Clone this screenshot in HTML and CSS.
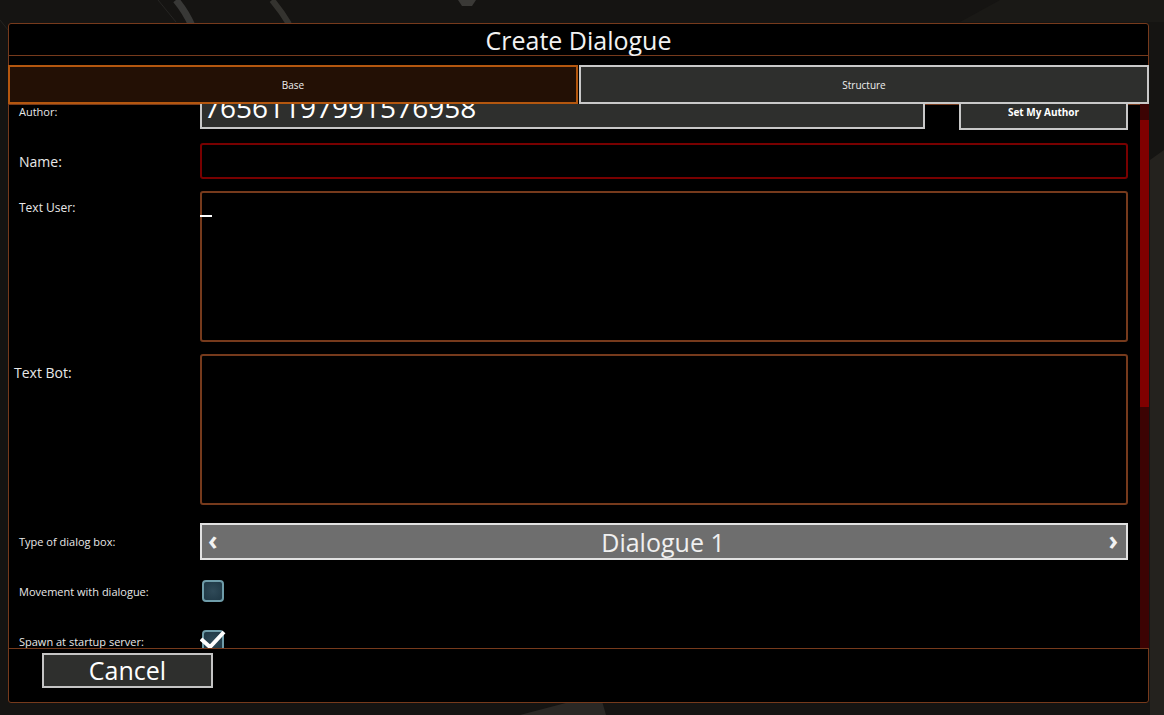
FILE: index.html
```html
<!DOCTYPE html>
<html lang="en">
<head>
    <meta charset="UTF-8">
    <title>Create Dialogue</title>
    <link rel="stylesheet" href="styles.css">
</head>
<body>
    <!-- fundo do jogo atrás do painel -->
    <svg class="backdrop" width="1164" height="715" viewBox="0 0 1164 715">
        <path d="M176 0 Q186 12 192 26" stroke="#383836" stroke-width="7" fill="none"/>
        <path d="M158 0 L176 22" stroke="#262523" stroke-width="1" fill="none"/>
        <path d="M272 0 Q282 12 289 24" stroke="#34332f" stroke-width="6" fill="none"/>
        <path d="M458 0 L476 0 L472 6 L462 6 Z" fill="#3a3936"/>
        <path d="M1000 0 L1164 0 L1164 22 L960 22 Z" fill="#1a1916"/>
        <path d="M1150 160 L1164 150 L1164 715 L1150 715 Z" fill="#24221e"/>
        <path d="M520 715 L600 694 L606 715 Z" fill="#2a2825"/>
        <path d="M0 20 L8 30" stroke="#242320" stroke-width="1"/>
    </svg>

    <div class="panel">
        <div class="title-bar">Create Dialogue</div>

        <div class="tabs">
            <button class="tab tab-active">Base</button>
            <button class="tab">Structure</button>
        </div>

        <div class="scroll-view">
            <div class="form">
                <div class="row row-author">
                    <span class="field-label">Author:</span>
                    <div class="author-input">76561197991576958</div>
                    <button class="btn-author">Set My Author</button>
                </div>

                <div class="row row-name">
                    <span class="field-label label-big">Name:</span>
                    <div class="input-name"></div>
                </div>

                <div class="row row-text">
                    <span class="field-label label-user">Text User:</span>
                    <div class="text-box"><span class="caret"></span></div>
                </div>

                <div class="row row-text row-bot">
                    <span class="field-label label-bot">Text Bot:</span>
                    <div class="text-box"></div>
                </div>

                <div class="row row-type">
                    <span class="field-label">Type of dialog box:</span>
                    <div class="selector">
                        <span class="arrow">&#x2039;</span>
                        <span class="selector-value">Dialogue 1</span>
                        <span class="arrow">&#x203A;</span>
                    </div>
                </div>

                <div class="row row-check">
                    <span class="field-label">Movement with dialogue:</span>
                    <div class="checkbox"></div>
                </div>

                <div class="row row-check row-spawn">
                    <span class="field-label">Spawn at startup server:</span>
                    <div class="checkbox">
                        <svg class="check-mark" width="28" height="24" viewBox="0 0 28 24">
                            <path d="M1 10 L10 18 L24 3" stroke="#fff" stroke-width="4" fill="none" stroke-linejoin="miter"/>
                        </svg>
                    </div>
                </div>
            </div>
            <div class="scrollbar"><div class="scroll-thumb"></div></div>
        </div>

        <div class="footer">
            <button class="btn-cancel">Cancel</button>
        </div>
    </div>
</body>
</html>
```

FILE: styles.css
```css
* { box-sizing: border-box; }
body {
    margin: 0;
    height: 715px;
    overflow: hidden;
    background: #151412;
    color: #f2f2f2;
    font-family: 'Open Sans', 'Liberation Sans', sans-serif;
}
.backdrop {
    position: absolute;
    top: 0; left: 0;
}
.panel {
    position: relative;
    margin: 23px 0 0 8px;
    width: 1141px;
    height: 680px;
    border: 1px solid #763a1c;
    border-radius: 3px;
    background: #000;
    display: flex;
    flex-direction: column;
}
.title-bar {
    height: 32px;
    border-bottom: 1px solid #763a1c;
    margin-bottom: 9px;
    display: flex;
    align-items: center;
    justify-content: center;
    font-size: 25px;
}
.tabs {
    display: flex;
    gap: 1px;
    margin: 0 -1px;
    height: 39px;
    position: relative;
    z-index: 1;
}
.tab {
    flex: 1;
    padding: 0;
    border: 2px solid #c9c9c9;
    background: #2e2f2d;
    color: #eee;
    font-family: inherit;
    font-size: 10px;
}
.tab-active {
    background: #231005;
    border-color: #b4570f;
}
/* Área rolável */
.scroll-view {
    flex: 1;
    display: flex;
    margin-right: -1px;
    overflow: hidden;
    box-shadow: inset 0 1px 0 #763a1c;
}
.form {
    flex: 1;
    margin-top: -11px;
    padding: 0 12px 0 10px;
}
.scrollbar {
    width: 9px;
    background: #3c0303;
}
.scroll-thumb {
    margin-top: 16px;
    height: 287px;
    background: #800000;
}
.row {
    display: flex;
    align-items: center;
}
.field-label {
    width: 181px;
    flex-shrink: 0;
    font-size: 11px;
    color: #e8e8e8;
}
.label-big { font-size: 14px; }
.row-author { height: 36px; }
.author-input {
    width: 725px;
    height: 36px;
    border: 2px solid #c8c8c8;
    border-top-color: #a9a9a9;
    background: #2e2f2d;
    padding-left: 2px;
    font-size: 28px;
    line-height: 24px;
    color: #fff;
    overflow: hidden;
}
.btn-author {
    margin-left: 34px;
    margin-top: 2px;
    width: 169px;
    height: 36px;
    border: 2px solid #c8c8c8;
    background: #2e2f2d;
    color: #fff;
    font-family: inherit;
    font-size: 10px;
    font-weight: bold;
    padding: 0;
}
.row-name { margin-top: 14px; height: 36px; }
.input-name {
    flex: 1;
    height: 36px;
    border: 2px solid #780000;
    border-radius: 3px;
}
.row-text {
    margin-top: 12px;
    align-items: flex-start;
}
.label-user {
    font-size: 12px;
    line-height: 15px;
    padding-top: 9px;
}
.label-bot {
    font-size: 14px;
    line-height: 16px;
    padding-top: 11px;
    margin-left: -5px;
    width: 186px;
}
.text-box {
    position: relative;
    flex: 1;
    height: 151px;
    border: 2px solid #763a1c;
    border-radius: 3px;
}
.caret {
    position: absolute;
    left: -2px;
    top: 22px;
    width: 12px;
    height: 2px;
    background: #fff;
}
.row-type { margin-top: 18px; height: 37px; }
.selector {
    flex: 1;
    height: 37px;
    border: 2px solid #e2e2e2;
    background: #6e6e6e;
    display: flex;
    align-items: center;
    justify-content: space-between;
    padding: 0 8px 0 6px;
}
.arrow {
    font-size: 26px;
    font-weight: bold;
    line-height: 1;
    margin-top: -4px;
}
.selector-value {
    font-size: 25px;
    color: #f0f0f0;
}
.row-check { margin-top: 20px; height: 22px; }
.row-spawn { margin-top: 28px; }
.checkbox {
    position: relative;
    margin-left: 2px;
    width: 22px;
    height: 22px;
    border: 2px solid #6e9ca9;
    border-radius: 4px;
    background: radial-gradient(circle, #2f4a58 0%, #1e3744 100%);
}
.check-mark {
    position: absolute;
    left: -4px;
    top: -3px;
}
/* Rodapé */
.footer {
    height: 54px;
    border-top: 1px solid #763a1c;
    padding: 4px 0 0 33px;
}
.btn-cancel {
    width: 171px;
    height: 35px;
    border: 2px solid #c4c4c4;
    background: #2e2f2d;
    color: #fff;
    font-family: inherit;
    font-size: 25px;
    line-height: 1;
    padding: 0;
}
```
